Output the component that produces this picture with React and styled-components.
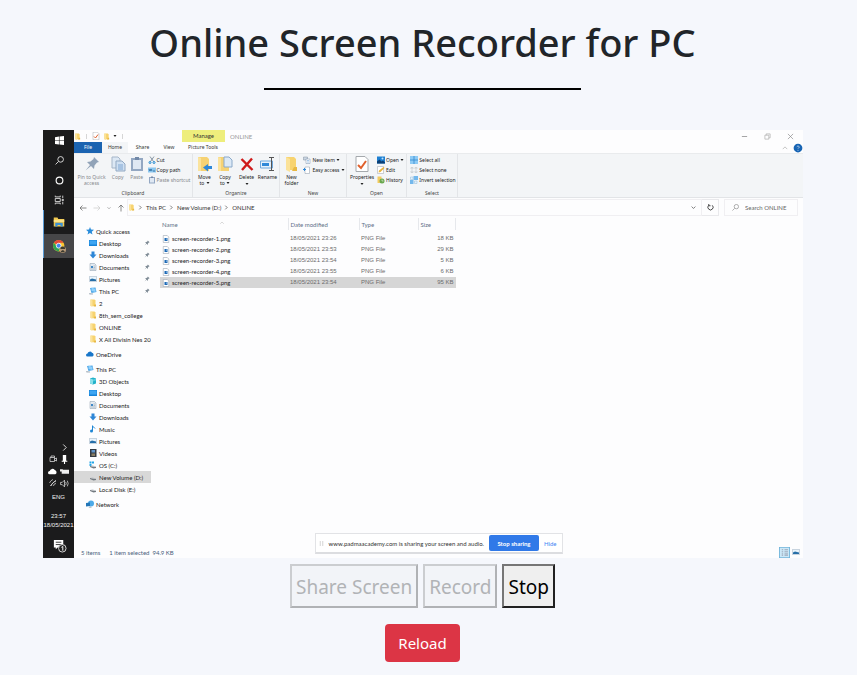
import React from 'react';
import styled, { createGlobalStyle } from 'styled-components';

const Global = createGlobalStyle`
  * { box-sizing: border-box; }
  body { margin: 0; background: #f5f7fc; font-family: "Noto Sans", "Open Sans", sans-serif; color: #212529; }
  button, input { font-family: inherit; }
`;

/* ---------- page ---------- */

const Page = styled.main`
  display: flex;
  flex-direction: column;
  align-items: center;
  padding: 18px 12px 12px 0;
`;
const Title = styled.h1`
  margin: 0;
  font-size: 38px;
  line-height: 48px;
  font-weight: 500;
  text-align: center;
`;
const Rule = styled.hr`
  width: 37.5%;
  margin: 22px 0 40px;
  border: 0;
  border-top: 2px solid #000;
`;
const Preview = styled.section`
  display: grid;
  grid-template-columns: 31px minmax(0, 1fr);
  align-self: stretch;
  margin: 0 42px 0 43px;
  min-height: 428px;
  font-family: Lato, "Noto Sans", sans-serif;
  font-size: 6px;
  line-height: 7px;
  white-space: nowrap;
  overflow: hidden;
`;
const Controls = styled.div`
  display: flex;
  gap: 5px;
  margin: 6px 0 16px;
`;
const ControlButton = styled.button`
  padding: 5px 4px 3px;
  font-size: 19px;
  line-height: 32px;
  color: #000;
  background: #efefef;
  border: 2px solid;
  border-color: #767676 #212121 #212121 #767676;
  &:disabled {
    color: #b1b3b6;
    background: #f2f4f8;
    border-color: #cbcdd0 #b0b2b5 #b0b2b5 #cbcdd0;
  }
`;
const ReloadButton = styled.button`
  padding: 7px 13px;
  font-size: 15px;
  line-height: 24px;
  color: #fff;
  background: #dc3545;
  border: 0;
  border-radius: 4px;
`;

/* ---------- taskbar ---------- */

const Taskbar = styled.nav`
  display: flex;
  flex-direction: column;
  background: #1b1b1c;
  color: #f1f1f1;
  text-align: center;
`;
const TaskButton = styled.button`
  display: flex;
  align-items: center;
  justify-content: center;
  height: ${(p) => (p.$running ? 24 : 20)}px;
  padding: 0;
  border: 0;
  border-left: 1px solid ${(p) => (p.$running ? '#5a9bd5' : 'transparent')};
  background: ${(p) => (p.$active ? '#464648' : 'transparent')};
  color: inherit;
`;
const Tray = styled.div`
  display: grid;
  grid-template-columns: 10px 10px;
  justify-content: center;
  justify-items: center;
  align-items: center;
  grid-auto-rows: 12px;
  gap: 0 2px;
  margin-top: auto;
  & > :first-child { grid-column: 2; }
`;
const TrayText = styled.span`
  line-height: 9px;
  font-family: "Liberation Sans", sans-serif;
  margin-top: ${(p) => p.$gap || 0}px;
`;
const Notices = styled(TaskButton)`
  height: 26px;
  margin-top: 2px;
`;

/* ---------- explorer window ---------- */

const Explorer = styled.div`
  position: relative;
  display: flex;
  flex-direction: column;
  background: #fdfdfe;
  color: #333;
`;
const TitleBar = styled.header`
  display: flex;
  align-items: center;
  height: 12px;
`;
const QuickTools = styled.div`
  display: flex;
  align-items: center;
  gap: 3px;
  width: 108px;
`;
const Manage = styled.span`
  width: 43px;
  line-height: 12px;
  text-align: center;
  background: #eeee7c;
`;
const WindowName = styled.span`
  margin-left: 5px;
  color: #999;
`;
const WindowButtons = styled.div`
  display: flex;
  gap: 16px;
  margin: 0 9px 0 auto;
`;
const Plain = styled.button`
  display: flex;
  align-items: center;
  justify-content: center;
  padding: 0;
  border: 0;
  background: none;
  color: inherit;
  font-size: inherit;
  line-height: inherit;
`;
const Tabs = styled.div`
  display: flex;
  height: 11px;
  font-family: "Noto Sans", sans-serif;
  font-size: 5px;
`;
const Tab = styled(Plain)`
  width: ${(p) => p.$w}px;
  color: ${(p) => (p.$file ? '#fff' : '#333')};
  background: ${(p) => (p.$file ? '#1a63b1' : p.$on ? '#f3f5f7' : 'transparent')};
`;
const TabsEnd = styled.div`
  display: flex;
  align-items: center;
  gap: 5px;
  margin-left: auto;
`;
const Ribbon = styled.div`
  display: flex;
  height: 45px;
  font-family: "Noto Sans", sans-serif;
  font-size: 5px;
  background: #f3f5f7;
  border-top: 1px solid #e9ebed;
  border-bottom: 1px solid #e2e4e7;
`;
const Group = styled.section`
  display: flex;
  flex-direction: column;
  width: ${(p) => p.$w}px;
  padding-top: 2px;
  border-right: 1px solid #e3e5e8;
`;
const GroupBody = styled.div`
  display: flex;
  justify-content: center;
  flex: 1;
`;
const GroupName = styled.span`
  text-align: center;
  color: #444;
`;
const Big = styled(Plain)`
  flex-direction: column;
  justify-content: flex-start;
  width: ${(p) => p.$w}px;
  gap: 2px;
  line-height: 6px;
  text-align: center;
  color: ${(p) => (p.$off ? '#85888c' : '#222')};
`;
const SmallStack = styled.div`
  display: flex;
  flex-direction: column;
  gap: 2px;
  padding-left: 2px;
`;
const Small = styled(Plain)`
  justify-content: flex-start;
  gap: 1px;
  height: 8px;
  color: ${(p) => (p.$off ? '#85888c' : '#222')};
`;
const AddressBar = styled.div`
  display: flex;
  align-items: stretch;
  height: 17px;
  margin: 1px 5px 0 0;
`;
const Arrows = styled.div`
  display: flex;
  align-items: center;
  gap: 6px;
  width: 53px;
  padding-left: 5px;
  color: #666;
`;
const Crumbs = styled.div`
  display: flex;
  align-items: center;
  gap: 3px;
  flex: 1;
  padding: 0 5px 0 0;
  border: 1px solid #f0eff2;
  & > :last-child { margin-left: auto; }
`;
const Refresh = styled(Plain)`
  width: 17px;
  border: 1px solid #e9e9ec;
  border-left: 0;
`;
const SearchBox = styled.label`
  display: flex;
  align-items: center;
  gap: 6px;
  width: 74px;
  margin-left: 5px;
  padding-left: 7px;
  border: 1px solid #f0eff2;
  color: #888;
`;
const SearchInput = styled.input`
  width: 50px;
  padding: 0;
  border: 0;
  background: none;
  font-size: 6px;
  color: #666;
  &::placeholder { color: #666; }
`;
const Content = styled.div`
  display: grid;
  grid-template-columns: 77px minmax(0, 1fr);
  gap: 9px;
  flex: 1;
`;
const Side = styled.nav`
  display: flex;
  flex-direction: column;
  gap: 3px;
  padding-top: 9px;
`;
const SideGroup = styled.div`
  display: flex;
  flex-direction: column;
`;
const SideItem = styled.a`
  display: flex;
  align-items: center;
  gap: 2px;
  height: 12px;
  padding: 0 1px 0 ${(p) => (p.$top ? 12 : 15)}px;
  color: #222;
  text-decoration: none;
  background: ${(p) => (p.$on ? '#d8d8d8' : 'transparent')};
  overflow: hidden;
  & > svg { flex: none; }
  & > .pin { margin-left: auto; }
`;
const Files = styled.table`
  align-self: start;
  width: 296px;
  margin-top: 2px;
  table-layout: fixed;
  border-collapse: collapse;
  color: #6c6c6c;
`;
const Head = styled.th`
  width: ${(p) => p.$w}px;
  height: 12px;
  padding: 0 2px;
  text-align: left;
  font-weight: 400;
  color: #5f6f88;
  border-right: 1px solid #e6e8ec;
`;
const SortMark = styled.span`
  display: inline-block;
  padding-left: 42px;
  vertical-align: top;
  line-height: 4px;
`;
const Spacer = styled.td`
  height: 3px;
  padding: 0;
`;
const Row = styled.tr`
  height: 11px;
  background: ${(p) => (p.$on ? '#d6d6d6' : 'transparent')};
`;
const Cell = styled.td`
  padding: 0 2px;
  font-family: ${(p) => (p.$name ? 'inherit' : '"Liberation Sans", sans-serif')};
  text-align: ${(p) => (p.$right ? 'right' : 'left')};
`;
const FileName = styled.div`
  display: flex;
  align-items: center;
  gap: 2px;
  color: #222;
`;
const StatusBar = styled.footer`
  display: flex;
  align-items: center;
  gap: 9px;
  height: 12px;
  padding: 0 3px 0 7px;
  color: #48607c;
`;
const Views = styled.div`
  display: flex;
  align-items: center;
  gap: 2px;
  margin-left: auto;
`;
const ShareNotice = styled.div`
  position: absolute;
  left: 50%;
  bottom: 4px;
  transform: translateX(-50%);
  display: flex;
  align-items: center;
  width: 248px;
  height: 21px;
  padding: 0 5px 0 3px;
  gap: 5px;
  background: #fff;
  border: 1px solid #e2e3e6;
  border-bottom: 2px solid #dcdde0;
`;
const StopSharing = styled(Plain)`
  width: 50px;
  height: 16px;
  margin-left: auto;
  border-radius: 2px;
  background: #3079e8;
  color: #fff;
  font-weight: 700;
`;
const Hide = styled(Plain)`
  color: #4285f4;
`;

/* ---------- icons ---------- */

const Svg = ({ s = 8, w, h, children, ...rest }) => (
  <svg width={w || s} height={h || s} viewBox="0 0 16 16" fill="none" aria-hidden="true" {...rest}>{children}</svg>
);
const Line = ({ d, c = 'currentColor', t = 1.5, ...rest }) => (
  <Svg {...rest}><path d={d} stroke={c} strokeWidth={t} /></Svg>
);
const Folder = ({ s = 8 }) => (
  <Svg s={s}><path d="M3 1h8l2 2v11H3z" fill="#f7d36f" /><path d="M3 1l4 2v13l-4-2z" fill="#fbe299" /><path d="M11 11h3v4h-5z" fill="#e8b842" /></Svg>
);
const Check = ({ s = 8 }) => (
  <Svg s={s}><path d="M2 .5h9l3 3v12H2z" fill="#fff" stroke="#a5a9ad" /><path d="M4 9l3 3 5-7" stroke="#e0602c" strokeWidth="2" /></Svg>
);
const Pin = ({ s = 7, c = '#7f8b96', ...rest }) => (
  <Svg s={s} {...rest}><path d="M10 1l5 5-2 .5-2.500 3L10 13l-3-3-5.500 4.500L6 9 3 6l3.500-.5 3-2.500z" fill={c} /></Svg>
);
const Pages = ({ s = 16 }) => (
  <Svg s={s}><path d="M2 1h6l2 2v9H2z" fill="#dce8f4" stroke="#a5b6c9" /><path d="M6 5h6l3 3v7H6z" fill="#cfe0f2" stroke="#92a9c3" /><path d="M8 9h5M8 11h5M8 13h5" stroke="#7fa6d2" /></Svg>
);
const Clip = ({ s = 16 }) => (
  <Svg s={s}><path d="M2 2h12v13H2z" fill="#93a7c2" /><path d="M4 4h8v9H4z" fill="#dfe8f3" /><path d="M6 1h4v3H6z" fill="#7289a8" /></Svg>
);
const Cut = () => (
  <Svg><path d="M4 1l7 10M12 1L5 11" stroke="#667788" strokeWidth="1.500" /><circle cx="4" cy="13" r="2" stroke="#1e88cf" strokeWidth="2" /><circle cx="12" cy="13" r="2" stroke="#1e88cf" strokeWidth="2" /></Svg>
);
const Path = () => (
  <Svg><path d="M0 3h16v10H0z" fill="#8cc7ee" /><path d="M2 6l2 4 2-4 2 4M10 10h4" stroke="#225d91" strokeWidth="1.500" /></Svg>
);
const FolderTo = ({ copy }) => (
  <Svg s={16}>
    <path d="M1 1h9l2 2v12H1z" fill="#f6d273" /><path d="M1 1l3 1v13H1z" fill="#fae39d" />
    {copy
      ? <path d="M7 1h5l3 3v7H7z" fill="#dce9f6" stroke="#8aa9ca" />
      : <path d="M15 10v3h-4v2.500L6 11.500 11 8v2z" fill="#2f88d8" />}
  </Svg>
);
const Cross = () => <Line s={16} d="M2.500 3l11 11M13 2.500L3 14" c="#cf1a1a" t={2.4} />;
const Rename = () => (
  <Svg s={16}><path d="M.5 5h12v7H.5z" fill="#e6f1fb" stroke="#6fa8dc" /><path d="M2 7h7v3H2z" fill="#2f88d8" /><path d="M9 1.500h5M9 14.500h5M11.500 1.500v13" stroke="#555" /></Svg>
);
const NewItem = () => (
  <Svg><path d="M1 2h8v6H1z" fill="#cbd6e2" stroke="#8291a1" /><path d="M6 6h8v9H6z" fill="#fff" stroke="#7891ac" /><path d="M8 9h4M8 12h4" stroke="#4f92d0" /></Svg>
);
const Easy = () => (
  <Svg><path d="M4 2h9v13H4z" fill="#fff" stroke="#8a98a8" /><path d="M0 7h6M3 4v6" stroke="#2f88d8" strokeWidth="2" /></Svg>
);
const Photo = ({ s = 8 }) => (
  <Svg s={s}><path d="M0 1h16v14H0z" fill="#1d7fd1" /><path d="M0 15V11l5-4 4 4 3-2 4 4v2z" fill="#0b3e73" /><circle cx="11" cy="5" r="2" fill="#bfe3ff" /></Svg>
);
const Edit = () => (
  <Svg><path d="M1 1h12v14H1z" fill="#fff" stroke="#9aa3ab" /><path d="M3 13l1-4 9-7 2 2-8 8z" fill="#e9b53e" /></Svg>
);
const History = () => (
  <Svg><path d="M1 1h8v13H1z" fill="#f3cb60" /><circle cx="10" cy="10" r="5" fill="#6aa84f" /><path d="M10 7v3h3" stroke="#fff" /></Svg>
);
const Tiles = () => (
  <Svg><path d="M0 0h16v16H0z" fill="#8ecbf5" /><path d="M8 0v16M0 8h16" stroke="#2f86cc" strokeWidth="1.500" /></Svg>
);
const TilesNone = () => (
  <Svg><path d="M2 3h4v3H2zM10 3h4v3h-4zM2 10h4v3H2zM10 10h4v3h-4z" stroke="#b3b8bd" /></Svg>
);
const TilesInvert = () => (
  <Svg><path d="M7 0h9v8H7zM0 8h7v8H0z" fill="#74b8ec" /><path d="M1 2h5v5H1zM9 10h5v5H9z" fill="#e6f2fb" stroke="#8fb9d9" /></Svg>
);
const Desktop = () => (
  <Svg><path d="M0 2h16v12H0z" fill="#1683d8" /><path d="M1 3h14v8H1z" fill="#3ea5f2" /></Svg>
);
const Down = () => <Svg><path d="M5 1h6v6h4l-7 8-7-8h4z" fill="#2e86d6" /></Svg>;
const Doc = () => (
  <Svg><path d="M2 1h9l3 3v11H2z" fill="#e4eaf0" stroke="#8a9aab" /><path d="M4 6h4v4H4z" fill="#3d87c7" /><path d="M9 6h3M9 9h3M4 12h8" stroke="#7b93aa" /></Svg>
);
const Picture = () => (
  <Svg><path d="M0 2h16v12H0z" fill="#c8d4df" /><path d="M2 4h12v8H2z" fill="#e9f4fc" /><path d="M2 12V9l4-2 8 2v3z" fill="#276fa8" /></Svg>
);
const PC = () => (
  <Svg><path d="M2 2l11-1 2 9-10 2z" fill="#4aa4e6" /><path d="M5 1l8 3v6L5 8z" fill="#8fd0fb" /><path d="M0 12l8 1v2H1z" fill="#a9b4be" /></Svg>
);
const Star = () => <Svg><path d="M8 0l2 5 6 .5-4.500 4L13 15l-5-3-5 3 1.500-5.500L0 5.500 6 5z" fill="#2a8ddb" /></Svg>;
const Cloud = ({ c = '#1976c9', s = 8 }) => <Svg s={s}><path d="M3 13a3 3 0 010-6 5 5 0 019-1.500A4 4 0 0113 13z" fill={c} /></Svg>;
const Cube = () => (
  <Svg><path d="M2 3l6-2 6 2v10l-6 2-6-2z" fill="#22b1c9" /><path d="M2 3l6 2v10l-6-2z" fill="#8be0ea" /><path d="M8 5l6-2v4l-6 2z" fill="#53cbdc" /></Svg>
);
const Note = () => <Svg><path d="M7 1v11M7 2l5 5" stroke="#1f86d4" strokeWidth="2" /><circle cx="5" cy="12" r="3" fill="#1f86d4" /></Svg>;
const Film = () => (
  <Svg><path d="M2 0h13v16H2z" fill="#333a42" /><path d="M5 2h7v5H5z" fill="#5f93c8" /><path d="M5 9h7v5H5z" fill="#887c62" /></Svg>
);
const Drive = ({ os }) => (
  <Svg>{os && <path d="M1 1h4v4H1zM6 1h4v4H6zM1 6h4v4H1z" fill="#22a5e6" />}<path d="M2 10l12 2v2l-5 1-7-3z" fill="#737a80" /><path d="M2 10l5-1 7 2v1z" fill="#b9bec3" /></Svg>
);
const Net = () => <Svg><circle cx="10" cy="7" r="6" fill="#4daae8" /><path d="M0 6l8-1v7l-8 1z" fill="#2376b7" /><path d="M8 13l4 2H5z" fill="#87949f" /></Svg>;
const FileIcon = () => (
  <Svg s={8}><path d="M2.500 1h8l3 3v11h-11z" fill="#fff" stroke="#8b97a4" /><path d="M5 6h6v6H5z" fill="#1d69b5" /><circle cx="9" cy="8" r="1" fill="#cfe9ff" /></Svg>
);
const Windows = () => <Svg s={9}><path d="M0 2l7-1v6.500H0zM8 1l8-1v7.500H8zM0 8.500h7V15l-7-1zM8 8.500h8V16l-8-1z" fill="#fff" /></Svg>;
const Magnify = ({ s = 8 }) => <Svg s={s}><circle cx="10" cy="6" r="5" stroke="currentColor" strokeWidth="1.500" /><path d="M6 10l-5 5" stroke="currentColor" strokeWidth="1.500" /></Svg>;
const Ring = () => <Svg s={9}><circle cx="8" cy="8" r="6" stroke="#fff" strokeWidth="2" /></Svg>;
const TaskView = () => <Line s={10} d="M2 1v2h8V1M2 15v-2h8v2M2 5.500h8v5H2zM14 1v4M14 11v4M13 7h2v2h-2z" t={1.3} />;
const ExplorerIcon = () => (
  <Svg s={12}><path d="M1 2h5l1 2h8v10H1z" fill="#f2c94f" /><path d="M1 5h14v3H1z" fill="#fbe38a" /><path d="M3 14V9h10v5h-3v-2H6v2z" fill="#3c91d4" /></Svg>
);
const Chrome = () => (
  <Svg s={13}>
    <circle cx="7" cy="7" r="7" fill="#fbc52d" /><path d="M7 7L1 3.500A7 7 0 0113 3.500H7z" fill="#e34a3b" /><path d="M1 3.500A7 7 0 007 14l2-5-4-1z" fill="#30a353" />
    <circle cx="7" cy="7" r="3" fill="#4285f4" stroke="#fff" />
    <circle cx="12" cy="12" r="4" fill="#b89a78" /><path d="M9 11a3 3 0 016 0zM9.500 15c1-3 4-3 5 0z" fill="#3b3a2f" />
  </Svg>
);
const NoticeIcon = () => (
  <Svg s={15}><path d="M2 2h10v8H6l-2 2v-2H2z" fill="#fff" /><path d="M4 4.500h6M4 7h6" stroke="#333" /><circle cx="11" cy="11" r="4" fill="#222" stroke="#ddd" /><path d="M10 10l1.500-1v4.500" stroke="#fff" /></Svg>
);
const Views1 = () => (
  <Svg s={11}><path d="M.5.5h15v15H.5z" fill="#cbe8f8" stroke="#6db3d9" strokeWidth="1.500" /><path d="M4 4h2M4 7h2M4 10h2M4 12h2M8 4h5M8 7h5M8 10h5M8 12h5" stroke="#889" /></Svg>
);

/* ---------- data ---------- */

const quick = [
  ['Desktop', Desktop, true], ['Downloads', Down, true], ['Documents', Doc, true], ['Pictures', Picture, true],
  ['This PC', PC, true], ['2', Folder], ['8th_sem_college', Folder], ['ONLINE', Folder], ['X All Divisin Nes 20', Folder],
];
const pc = [
  ['3D Objects', Cube], ['Desktop', Desktop], ['Documents', Doc], ['Downloads', Down], ['Music', Note],
  ['Pictures', Picture], ['Videos', Film], ['OS (C:)', () => <Drive os />], ['New Volume (D:)', Drive], ['Local Disk (E:)', Drive],
];
const files = [
  ['screen-recorder-1.png', '18/05/2021 23:26', '18 KB'],
  ['screen-recorder-2.png', '18/05/2021 23:53', '29 KB'],
  ['screen-recorder-3.png', '18/05/2021 23:54', '5 KB'],
  ['screen-recorder-4.png', '18/05/2021 23:55', '6 KB'],
  ['screen-recorder-5.png', '18/05/2021 23:54', '95 KB'],
];

const Nav = ({ items }) => items.map(([name, Icon, pinned]) => (
  <SideItem href="#" key={name} $on={name === 'New Volume (D:)'}>
    <Icon />{name}{pinned && <Pin className="pin" s={6} />}
  </SideItem>
));
const Caret = () => <Svg s={4}><path d="M2 4h12l-6 8z" fill="#222" /></Svg>;
const Chevron = () => <Line s={5} d="M4 2l6 6-6 6" t={2} />;
const ChevronDown = () => <Line s={5} d="M2 5l6 6 6-6" t={2} />;

function TaskStrip() {
  return (
    <Taskbar aria-label="Taskbar">
      <TaskButton aria-label="Start"><Windows /></TaskButton>
      <TaskButton aria-label="Search"><Magnify s={9} /></TaskButton>
      <TaskButton aria-label="Cortana"><Ring /></TaskButton>
      <TaskButton aria-label="Task view"><TaskView /></TaskButton>
      <TaskButton $running aria-label="File Explorer"><ExplorerIcon /></TaskButton>
      <TaskButton $running $active aria-label="Chrome"><Chrome /></TaskButton>
      <Tray>
        <Line s={7} d="M5 1l7 7-7 7" t={2} />
        <Svg s={8}><path d="M2 5h9v8H2zM4 5V2h7v3M11 8l4-2v6l-4-2" stroke="#ddd" strokeWidth="1.500" /></Svg>
        <Svg s={9}><path d="M5 0h6v10H5zM3 10h10v2H3zM7 12h2v4H7z" fill="#fff" /></Svg>
        <Cloud c="#fff" s={9} />
        <Svg s={9}><path d="M3 5h13v7H3zM0 4h5v4H0z" fill="#eee" /></Svg>
        <Line s={8} d="M2 14L14 2M5 14a9 9 0 019-9M9 14a5 5 0 015-5M1 8a12 12 0 017-7" t={1.3} />
        <Line s={9} d="M1 6h3l4-4v12l-4-4H1zM10 5q2 3 0 6M13 3q3 5 0 10" t={1.2} />
      </Tray>
      <TrayText $gap={4}>ENG</TrayText>
      <TrayText $gap={10}>23:57</TrayText>
      <TrayText>18/05/2021</TrayText>
      <Notices aria-label="Notifications"><NoticeIcon /></Notices>
    </Taskbar>
  );
}

function RibbonBar() {
  return (
    <Ribbon>
      <Group $w={119}>
        <GroupBody>
          <Big $w={32} $off><Pin s={16} c="#91a3b8" /><span>Pin to Quick<br />access</span></Big>
          <Big $w={20} $off><Pages />Copy</Big>
          <Big $w={18} $off><Clip />Paste</Big>
          <SmallStack>
            <Small><Cut />Cut</Small>
            <Small><Path />Copy path</Small>
            <Small $off><Clip s={8} />Paste shortcut</Small>
          </SmallStack>
        </GroupBody>
        <GroupName>Clipboard</GroupName>
      </Group>
      <Group $w={87}>
        <GroupBody>
          <Big $w={20}><FolderTo /><span>Move<br />to <Caret /></span></Big>
          <Big $w={21}><FolderTo copy /><span>Copy<br />to <Caret /></span></Big>
          <Big $w={22}><Cross /><span>Delete</span><Caret /></Big>
          <Big $w={20}><Rename />Rename</Big>
        </GroupBody>
        <GroupName>Organize</GroupName>
      </Group>
      <Group $w={67}>
        <GroupBody>
          <Big $w={20}><Folder s={16} /><span>New<br />folder</span></Big>
          <SmallStack>
            <Small><NewItem />New item <Caret /></Small>
            <Small><Easy />Easy access <Caret /></Small>
          </SmallStack>
        </GroupBody>
        <GroupName>New</GroupName>
      </Group>
      <Group $w={60}>
        <GroupBody>
          <Big $w={26}><Check s={16} /><span>Properties</span><Caret /></Big>
          <SmallStack>
            <Small><Photo />Open <Caret /></Small>
            <Small><Edit />Edit</Small>
            <Small><History />History</Small>
          </SmallStack>
        </GroupBody>
        <GroupName>Open</GroupName>
      </Group>
      <Group $w={51}>
        <GroupBody>
          <SmallStack>
            <Small><Tiles />Select all</Small>
            <Small><TilesNone />Select none</Small>
            <Small><TilesInvert />Invert selection</Small>
          </SmallStack>
        </GroupBody>
        <GroupName>Select</GroupName>
      </Group>
    </Ribbon>
  );
}

function ExplorerWindow() {
  return (
    <Explorer>
      <TitleBar>
        <QuickTools>
          <Folder s={7} /><Line s={5} d="M8 0v16" c="#aaa" /><Check s={8} /><Folder s={7} /><Caret /><Line s={5} d="M8 0v16" c="#aaa" />
        </QuickTools>
        <Manage>Manage</Manage>
        <WindowName>ONLINE</WindowName>
        <WindowButtons>
          <Plain aria-label="Minimize"><Line s={7} d="M2 8h12" c="#777" /></Plain>
          <Plain aria-label="Restore"><Line s={7} d="M2 5h9v9H2zM5 5V2h9v9h-3" c="#aaa" /></Plain>
          <Plain aria-label="Close"><Line s={7} d="M2 2l12 12M14 2L2 14" c="#888" /></Plain>
        </WindowButtons>
      </TitleBar>
      <Tabs>
        <Tab $w={28} $file>File</Tab>
        <Tab $w={26} $on>Home</Tab>
        <Tab $w={29}>Share</Tab>
        <Tab $w={24}>View</Tab>
        <Tab $w={44}>Picture Tools</Tab>
        <TabsEnd>
          <Line s={6} d="M2 11l6-6 6 6" c="#999" />
          <Svg s={10}><circle cx="8" cy="8" r="7" fill="#1764b4" /><path d="M6 6q2-3 4 0 0 1.500-2 3M8 11v1.500" stroke="#fff" /></Svg>
        </TabsEnd>
      </Tabs>
      <RibbonBar />
      <AddressBar>
        <Arrows>
          <Line s={8} d="M15 8H2l5-5M2 8l5 5" />
          <Line s={8} d="M1 8h13L9 3M14 8l-5 5" c="#ccc" />
          <Line s={4} d="M2 5l6 6 6-6" t={2} />
          <Line s={8} d="M8 15V2L3 7M8 2l5 5" />
        </Arrows>
        <Crumbs>
          <Folder s={7} /><Chevron />This PC<Chevron />New Volume (D:)<Chevron />ONLINE<ChevronDown />
        </Crumbs>
        <Refresh aria-label="Refresh"><Line s={7} d="M12 3a6 6 0 11-8 0M4 0v4h4" t={2} /></Refresh>
        <SearchBox><Magnify s={7} /><SearchInput aria-label="Search ONLINE" placeholder="Search ONLINE" /></SearchBox>
      </AddressBar>
      <Content>
        <Side aria-label="Folders">
          <SideGroup><SideItem href="#" $top><Star />Quick access</SideItem><Nav items={quick} /></SideGroup>
          <SideItem href="#" $top><Cloud />OneDrive</SideItem>
          <SideGroup><SideItem href="#" $top><PC />This PC</SideItem><Nav items={pc} /></SideGroup>
          <SideItem href="#" $top><Net />Network</SideItem>
        </Side>
        <Files>
          <thead>
            <tr>
              <Head $w={128}>Name<SortMark><Line s={4} d="M1 11l7-7 7 7" c="#999" /></SortMark></Head>
              <Head $w={71}>Date modified</Head><Head $w={59}>Type</Head><Head>Size</Head>
            </tr>
          </thead>
          <tbody>
            <tr><Spacer colSpan={4} /></tr>
            {files.map(([name, date, size], i) => (
              <Row key={name} $on={i === 4}>
                <Cell $name><FileName><FileIcon />{name}</FileName></Cell>
                <Cell>{date}</Cell><Cell>PNG File</Cell><Cell $right>{size}</Cell>
              </Row>
            ))}
          </tbody>
        </Files>
      </Content>
      <StatusBar>
        <span>5 items</span><span>1 item selected&nbsp; 94.9 KB</span>
        <Views><Views1 /><Picture /></Views>
      </StatusBar>
      <ShareNotice>
        <Line s={5} d="M4 0v16M12 0v16" c="#bbb" t={2} />
        <span>www.padmaacademy.com is sharing your screen and audio.</span>
        <StopSharing>Stop sharing</StopSharing>
        <Hide>Hide</Hide>
      </ShareNotice>
    </Explorer>
  );
}

export default function App() {
  return (
    <>
      <Global />
      <Page>
        <Title>Online Screen Recorder for PC</Title>
        <Rule />
        <Preview aria-label="Screen preview">
          <TaskStrip />
          <ExplorerWindow />
        </Preview>
        <Controls>
          <ControlButton disabled>Share Screen</ControlButton>
          <ControlButton disabled>Record</ControlButton>
          <ControlButton>Stop</ControlButton>
        </Controls>
        <ReloadButton>Reload</ReloadButton>
      </Page>
    </>
  );
}
